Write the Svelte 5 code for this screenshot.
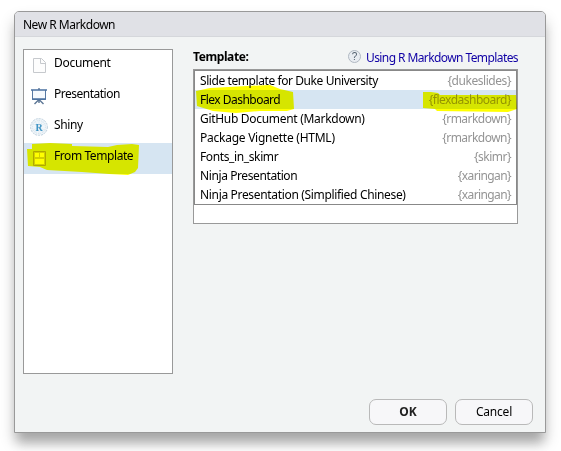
<script>
  const kinds = [
    { name: 'Document', icon: 'doc', ls: -0.3 },
    { name: 'Presentation', icon: 'board', ls: -0.5 },
    { name: 'Shiny', icon: 'shiny', ls: -0.35 },
    { name: 'From Template', icon: 'template', ls: -0.42 }
  ];
  const templates = [
    { name: 'Slide template for Duke University', ls: -0.42, pkg: '{dukeslides}', pls: -0.45 },
    { name: 'Flex Dashboard', ls: -0.52, pkg: '{flexdashboard}', pls: -0.5 },
    { name: 'GitHub Document (Markdown)', ls: -0.3, pkg: '{rmarkdown}', pls: -0.53 },
    { name: 'Package Vignette (HTML)', ls: -0.25, pkg: '{rmarkdown}', pls: -0.53 },
    { name: 'Fonts_in_skimr', ls: -0.38, pkg: '{skimr}', pls: -0.5 },
    { name: 'Ninja Presentation', ls: -0.4, pkg: '{xaringan}', pls: -0.6 },
    { name: 'Ninja Presentation (Simplified Chinese)', ls: -0.33, pkg: '{xaringan}', pls: -0.6 }
  ];
  let kind = $state('From Template');
  let template = $state('Flex Dashboard');
</script>

<div class="page">
  <div class="dialog">
    <header>New R Markdown</header>
    <main>
      <div class="kinds">
        {#each kinds as k}
          <div class="kind" class:selected={kind === k.name} onclick={() => (kind = k.name)} role="presentation">
            <svg width="20" height="20" viewBox="0 0 20 20" fill="none">
              {#if k.icon === 'doc'}
                <path d="M4.5 3.5h8l4 4v10h-12z" fill="#fdfdfd" stroke="#c6c9cd" />
                <path d="M11.5 3.5v5h5" stroke="#c6c9cd" />
              {:else if k.icon === 'board'}
                <path d="M10 2v2M10 13v4M9.5 14l-4 4M10.5 14l4 4" stroke="#5c7695" stroke-width="1.4" />
                <path d="M3.5 4v9.5h13V4" fill="#f5f9fd" stroke="#5879a3" />
                <path d="M2 4h16M3 13h14" stroke="#4a70a0" stroke-width="1.6" />
              {:else if k.icon === 'shiny'}
                <circle cx="10" cy="10" r="8.4" fill="#f1f6fa" stroke="#bed0dd" stroke-dasharray="2 1" />
                <circle cx="10" cy="10" r="6.5" stroke="#d3e1ea" stroke-dasharray="1 1" />
                <path d="M3 6l14 8M3 14l14-8M10 1v18M5 3l10 14M15 3L5 17" stroke="#d9e6ee" stroke-width=".6" />
                <text x="10" y="13.5" text-anchor="middle">R</text>
              {:else}
                <path d="M4.5 3.5h12v14h-12z" fill="#d3cf96" stroke="#b0a878" />
                <path d="M6 5h4v4H6zM11 5h4v4h-4zM6 11h9v5H6z" fill="#fff" />
              {/if}
            </svg>
            <span style="letter-spacing: {k.ls}px">{k.name}</span>
          </div>
        {/each}
      </div>
      <section>
        <div class="caption">
          <b>Template:</b>
          <a href="#help"><i>?</i><span>Using R Markdown Templates</span></a>
        </div>
        <div class="frame">
          <div class="list">
            {#each templates as t}
              <div class="row" class:selected={template === t.name} onclick={() => (template = t.name)} role="presentation">
                <span style="letter-spacing: {t.ls}px">{t.name}</span>
                <em style="letter-spacing: {t.pls}px">{t.pkg}</em>
              </div>
            {/each}
          </div>
        </div>
      </section>
    </main>
    <footer><button class="ok">OK</button><button>Cancel</button></footer>
  </div>
  <svg class="marker" width="561" height="451" fill="#ff0">
    <path d="M27 149h5v-5l18-1 22 1v2l36 1 9-2 15-1 7 1-1 23-3 4-7 3-19-1-27-2-35-2-7-3-12-1z" />
    <path d="M196 91l14-3 37-2 23-1 10 4 13 3 1 17-7 2-27 0-24 2-23-2-16-5z" />
    <path d="M423 92h8l7 1 2 2h76l1 14-9 3-71-1-2-2-12-1z" />
  </svg>
</div>

<style>
  .page {
    position: relative;
    width: 561px;
    height: 451px;
    box-sizing: border-box;
    padding: 11px 0 0 14px;
    overflow: hidden;
    background: #fff;
    color: #000;
    font: 12px/16px "Noto Sans", "Open Sans", sans-serif;
    letter-spacing: -0.2px;
  }
  .dialog {
    box-sizing: border-box;
    width: 532px;
    height: 422px;
    display: flex;
    flex-direction: column;
    border: 1px solid #999;
    border-radius: 5px 5px 0 0;
    background: #f2f4f4;
    box-shadow: 0 13px 11px -3px rgba(0, 0, 0, 0.2), 0 9px 15px rgba(0, 0, 0, 0.2);
  }
  header {
    height: 24px;
    border-bottom: 1px solid #d5d7db;
    border-radius: 4px 4px 0 0;
    background: #e0e1e6;
    padding-left: 8px;
    line-height: 26px;
    letter-spacing: -0.5px;
  }
  main { display: flex; padding: 12px 0 0 8px; }
  .kinds {
    box-sizing: border-box;
    width: 150px;
    height: 325px;
    border: 1px solid #999;
    background: #fff;
  }
  .kind { display: flex; height: 31px; }
  .kind svg { margin: 5px 5px 0 5px; flex: none; }
  .kind span { margin-top: 5px; }
  .kind text { font: bold 10px "Liberation Serif", serif; fill: #3f94c4; letter-spacing: 0; }
  .selected { background: #d6e5f2; }
  section { width: 325px; margin-left: 20px; }
  .caption { display: flex; justify-content: space-between; height: 20px; white-space: nowrap; }
  .caption b { letter-spacing: -0.4px; }
  a { display: flex; color: #1000a5; text-decoration: none; letter-spacing: -0.59px; }
  a span { padding-top: 1px; }
  i {
    box-sizing: border-box;
    width: 13px;
    height: 13px;
    margin: 1px 5px 0 0;
    border: 1px solid #b0b8c2;
    border-radius: 50%;
    background: #e8ecf1;
    color: #53606e;
    font: 10px/11px "Liberation Sans", sans-serif;
    letter-spacing: 0;
    text-align: center;
  }
  .frame { box-sizing: border-box; height: 155px; border: 1px solid #999; background: #fff; }
  .list { border: 1px solid #888; }
  .row {
    display: flex;
    justify-content: space-between;
    height: 19px;
    padding: 0 5px;
    line-height: 20px;
    white-space: nowrap;
  }
  em { color: #949494; font-style: normal; }
  footer { display: flex; justify-content: flex-end; gap: 8px; margin-top: auto; padding: 0 12px 7px 0; }
  button {
    box-sizing: border-box;
    width: 78px;
    height: 26px;
    padding: 0;
    border: 1px solid #b9b9b9;
    border-radius: 7px;
    background: #f7f7f9;
    color: #000;
    font: inherit;
    letter-spacing: inherit;
  }
  .ok { font-weight: bold; color: #222; letter-spacing: 0; }
  .marker { position: absolute; inset: 0; mix-blend-mode: multiply; pointer-events: none; }
</style>
